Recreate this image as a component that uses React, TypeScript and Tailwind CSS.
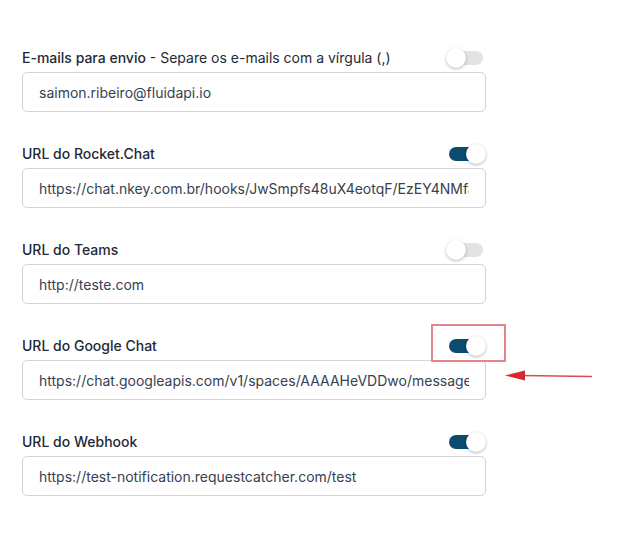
import { useState } from 'react';

interface Channel {
  id: string;
  label: string;
  hint?: string;
  value: string;
  enabled: boolean;
}

const channels: Channel[] = [
  { id: 'email', label: 'E-mails para envio', hint: 'Separe os e-mails com a vírgula (,)', value: 'saimon.ribeiro@fluidapi.io', enabled: false },
  { id: 'rocket', label: 'URL do Rocket.Chat', value: 'https://chat.nkey.com.br/hooks/JwSmpfs48uX4eotqF/EzEY4NMfaB7kQxTp', enabled: true },
  { id: 'teams', label: 'URL do Teams', value: 'http://teste.com', enabled: false },
  { id: 'gchat', label: 'URL do Google Chat', value: 'https://chat.googleapis.com/v1/spaces/AAAAHeVDDwo/messages?key=AIza', enabled: true },
  { id: 'webhook', label: 'URL do Webhook', value: 'https://test-notification.requestcatcher.com/test', enabled: true },
];

function Toggle({ checked, onChange }: { checked: boolean; onChange: () => void }) {
  return (
    <button
      type="button"
      onClick={onChange}
      className="relative w-[40px] h-[20px] flex-shrink-0"
      aria-pressed={checked}
    >
      <span
        className={`absolute left-[3px] right-[3px] top-[3px] h-[14px] rounded-full ${
          checked ? 'bg-[#0c4a6e]' : 'bg-[#e3e3e3]'
        }`}
      />
      <span
        className={`absolute top-0 w-[20px] h-[20px] rounded-full bg-white shadow-[0_1px_3px_rgba(0,0,0,0.3)] ${
          checked ? 'left-[20px]' : 'left-0'
        }`}
      />
    </button>
  );
}

export default function App() {
  const [state, setState] = useState(channels);

  const toggle = (id: string) =>
    setState((prev) => prev.map((c) => (c.id === id ? { ...c, enabled: !c.enabled } : c)));

  return (
    <div
      className="relative w-[633px] h-[538px] bg-white overflow-hidden"
      style={{ fontFamily: 'Inter, "Noto Sans", sans-serif' }}
    >
      <div className="pt-12 pl-[22px] w-[486px]">
        {state.map((c) => (
          <div key={c.id} className="mb-8">
            <div className="flex items-center justify-between h-5 mb-1">
              <label className="text-sm text-[#1f2937]">
                <span className="font-medium">{c.label}</span>
                {c.hint && <span> - {c.hint}</span>}
              </label>
              <Toggle checked={c.enabled} onChange={() => toggle(c.id)} />
            </div>
            <input
              readOnly
              value={c.value}
              className="w-full h-10 px-4 text-sm text-[#374151] border border-[#d4d4d8] rounded-[5px] outline-none bg-white"
            />
          </div>
        ))}
      </div>

      {/* highlight around the Google Chat switch */}
      <div className="absolute left-[431px] top-[324px] w-[75px] h-[38px] border-2 border-[#e2868b] pointer-events-none" />

      {/* pointer arrow */}
      <svg className="absolute left-[500px] top-[366px] pointer-events-none" width="100" height="20" viewBox="0 0 100 20">
        <line x1="20" y1="9.5" x2="92" y2="10.5" stroke="#e0474d" strokeWidth="1.5" />
        <polygon points="5,9.5 25,4.5 25,14.5" fill="#d8262d" />
      </svg>
    </div>
  );
}
